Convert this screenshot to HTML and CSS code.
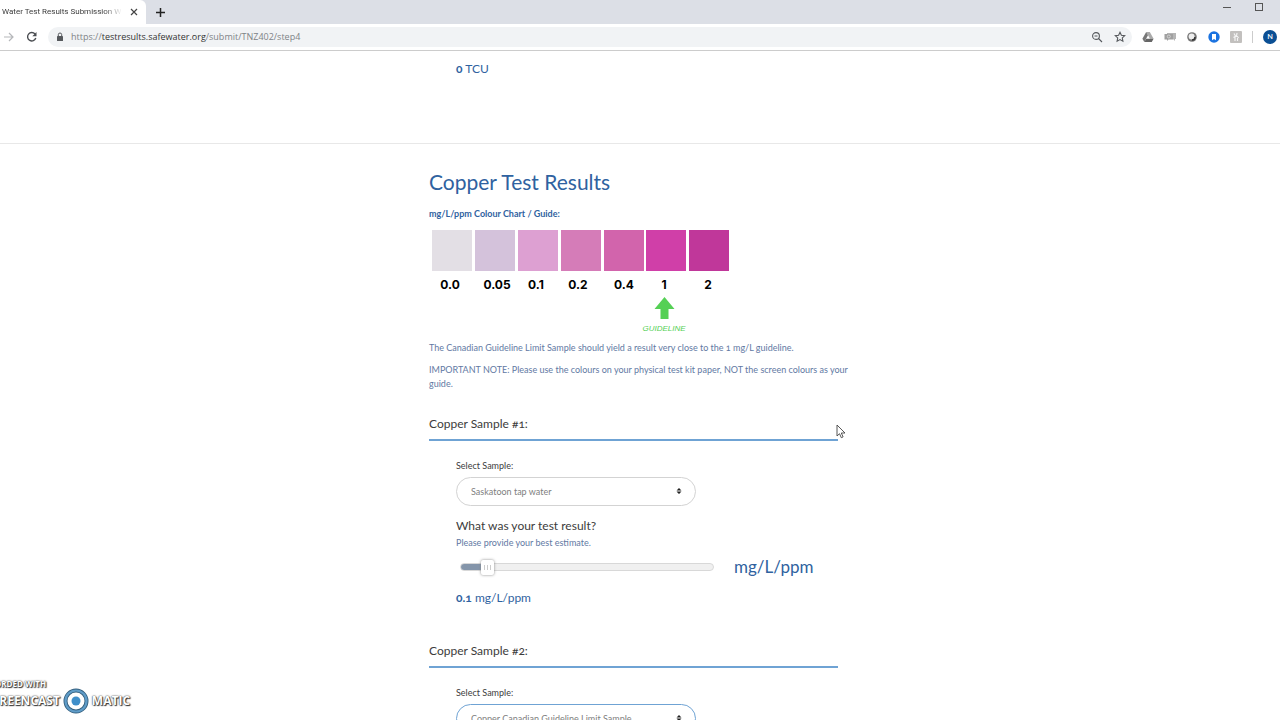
FILE: index.html
```html
<!DOCTYPE html>
<html lang="en">
  <head>
    <meta charset="utf-8" />
    <title>Water Test Results Submission</title>
    <link rel="stylesheet" href="styles.css">
  </head>
  <body>
    <div class="tab-strip">
      <div class="tab">
        <span class="tab-title">Water Test Results Submission W</span>
        <button class="tab-close" aria-label="Close tab">
          <svg width="8" height="8" viewBox="0 0 8 8"><path d="M1 1l6 6M7 1l-6 6" stroke="#444" stroke-width="1.2" /></svg>
        </button>
      </div>
      <button class="new-tab" aria-label="New tab">
        <svg width="9" height="9" viewBox="0 0 9 9"><path d="M4.5 0v9M0 4.500h9" stroke="#222" stroke-width="1.5" /></svg>
      </button>
      <div class="window-controls">
        <svg width="8" height="10" viewBox="0 0 8 10"><path d="M0 5.500h8" stroke="#555" /></svg>
        <svg width="8" height="10" viewBox="0 0 8 10"><rect x=".5" y="1.500" width="7" height="7" fill="none" stroke="#555" /></svg>
      </div>
    </div>

    <div class="toolbar">
      <svg class="forward" width="12" height="12" viewBox="0 0 12 12"><path d="M0 6h9M5 2l4 4-4 4" fill="none" stroke="#b5b7ba" stroke-width="1.2" /></svg>
      <svg width="12" height="12" viewBox="0 0 12 12"><path d="M9 3A4.200 4.200 0 1 0 9.800 7" fill="none" stroke="#4a4d51" stroke-width="1.400" /><path d="M10.500 1v4.200H6.300z" fill="#4a4d51" /></svg>
      <div class="omnibox">
        <svg width="8" height="10" viewBox="0 0 8 10"><rect x="1" y="4" width="6" height="5" rx=".6" fill="#55585c" /><path d="M2.300 4V2.700a1.700 1.700 0 0 1 3.400 0V4" fill="none" stroke="#55585c" /></svg>
        <span class="url">https://<b>testresults.safewater.org</b>/submit/TNZ402/step4</span>
        <div class="omnibox-icons">
          <svg width="12" height="12" viewBox="0 0 12 12"><circle cx="5" cy="5" r="3.400" fill="none" stroke="#55585c" stroke-width="1.100" /><path d="M7.500 7.500L11 11M3.500 5h3" stroke="#55585c" stroke-width="1.100" /></svg>
          <svg width="12" height="12" viewBox="0 0 12 12"><path d="M6 1.300l1.400 3 3.300.4-2.400 2.200.6 3.300L6 8.600l-2.900 1.600.6-3.300-2.400-2.200 3.300-.4z" fill="none" stroke="#55585c" stroke-width="1.100" /></svg>
        </div>
      </div>
      <div class="extensions">
        <svg width="12" height="12" viewBox="0 0 12 12"><path d="M4.200 1h3.600l3.800 6.700H8z" fill="#aaa" /><path d="M4.200 1L6 4.300 2.300 11 .4 7.700z" fill="#777" /><path d="M4.200 7.700h7.400L9.800 11H2.300z" fill="#666" /></svg>
        <svg width="12" height="12" viewBox="0 0 12 12"><path d="M3 2h9v6h-1v2L9 8H3z" fill="#b5b5b5" /><path d="M.5 3h8.500v5.500H4.500L3 10V8.500H.5z" fill="#a0a0a0" /><circle cx="4.800" cy="5.500" r="1.500" fill="none" stroke="#ddd" stroke-width=".8" /></svg>
        <svg width="12" height="12" viewBox="0 0 12 12"><circle cx="6" cy="6" r="4.800" fill="#777" /><circle cx="5.600" cy="5.400" r="3" fill="#eee" /><path d="M6 9a3 3 0 0 0 3-3" stroke="#333" stroke-width="1.500" fill="none" /></svg>
        <svg width="12" height="12" viewBox="0 0 12 12"><circle cx="6" cy="6" r="5.700" fill="#1b73e0" /><path d="M4 3h4v6.200L6 8 4 9.200z" fill="#fff" /></svg>
        <svg width="12" height="12" viewBox="0 0 12 12"><rect width="12" height="12" rx="1" fill="#c2c0be" /><path d="M4 2.500l1.500 2.500M7 2l-.5 3M3.500 6.500L5 5.500h2.500l1 1.500M5 6v4M7.500 7v3" stroke="#f4f4f4" stroke-width="1.200" fill="none" /></svg>
        <span class="divider"></span>
        <span class="avatar">N</span>
      </div>
    </div>

    <main class="page">
      <section class="band band-colour">
        <div class="column">
          <p class="reading indent"><b>0</b> TCU</p>
        </div>
      </section>

      <section class="band">
        <div class="column">
          <h1>Copper Test Results</h1>
          <h2>mg/L/ppm Colour Chart / Guide:</h2>
          <svg class="chart" width="306" height="108" viewBox="0 0 306 108" role="img" aria-label="Copper colour chart">
            <rect x="3" y="3" width="40" height="41" fill="#e3dfe5" />
            <rect x="46" y="3" width="40" height="41" fill="#d4c2db" />
            <rect x="89" y="3" width="40" height="41" fill="#dda0d2" />
            <rect x="132" y="3" width="40" height="41" fill="#d57cb8" />
            <rect x="175" y="3" width="40" height="41" fill="#d264ac" />
            <rect x="217" y="3" width="40" height="41" fill="#d03fa8" />
            <rect x="260" y="3" width="40" height="41" fill="#c0379a" />
            <g class="chart-value">
              <text x="21" y="62">0.0</text>
              <text x="68" y="62">0.05</text>
              <text x="107" y="62">0.1</text>
              <text x="149" y="62">0.2</text>
              <text x="195" y="62">0.4</text>
              <text x="235" y="62">1</text>
              <text x="279" y="62">2</text>
            </g>
            <path d="M235.500 70l10 12h-6v10h-8V82h-6z" fill="#55d055" />
            <text class="chart-guideline" x="235" y="104">GUIDELINE</text>
          </svg>
          <div class="notes">
            <p>The Canadian Guideline Limit Sample should yield a result very close to the 1 mg/L guideline.</p>
            <p>IMPORTANT NOTE: Please use the colours on your physical test kit paper, NOT the screen colours as your guide.</p>
          </div>

          <h3>Copper Sample #1:</h3>
          <div class="sample indent">
            <label class="select-label" for="sample1">Select Sample:</label>
            <div class="select-wrap">
              <select id="sample1"><option>Saskatoon tap water</option></select>
              <svg class="arrows" width="6" height="8" viewBox="0 0 6 8"><path d="M3 1l2.500 2.500H.5zM3 7L.5 4.500h5z" fill="#222" /></svg>
            </div>
            <label class="question" for="result1">What was your test result?</label>
            <p class="hint">Please provide your best estimate.</p>
            <div class="slider-row">
              <input class="slider" id="result1" type="range" min="0" max="1.2" step="0.1" value="0.1" />
              <span class="unit">mg/L/ppm</span>
            </div>
            <p class="reading"><b>0.1</b> mg/L/ppm</p>
          </div>

          <h3>Copper Sample #2:</h3>
          <div class="sample indent">
            <label class="select-label" for="sample2">Select Sample:</label>
            <div class="select-wrap">
              <select class="active" id="sample2"><option>Copper Canadian Guideline Limit Sample</option></select>
              <svg class="arrows" width="6" height="8" viewBox="0 0 6 8"><path d="M3 1l2.500 2.500H.5zM3 7L.5 4.500h5z" fill="#222" /></svg>
            </div>
          </div>
        </div>
      </section>
    </main>

    <svg class="cursor" width="10" height="15" viewBox="0 0 10 15"><path d="M1 1v11l2.500-2.300 1.800 4 1.800-.8-1.800-3.900H9z" fill="#fff" stroke="#444" stroke-width=".9" /></svg>

    <div class="watermark">
      <span class="watermark-top">RECORDED WITH</span>
      <div class="watermark-brand">
        <span>SCREENCAST</span>
        <svg width="26" height="26" viewBox="0 0 26 26"><circle cx="13" cy="13" r="10.500" fill="#fff" stroke="#35607f" stroke-width="4" /><circle cx="13" cy="13" r="10.500" fill="none" stroke="#5f9cc8" stroke-width="2.200" /><circle cx="13" cy="13" r="4.500" fill="#3f8fca" /></svg>
        <span>MATIC</span>
      </div>
    </div>
  </body>
</html>
```
FILE: styles.css
```css
:root {
  --blue: #2f62a0;
  --note: #6279a3;
  --line: #6fa3d4;
  --text: #3c3c3c;
}

* {
  box-sizing: border-box;
}

body {
  display: flex;
  flex-direction: column;
  height: 100vh;
  margin: 0;
  overflow: hidden;
  background: #fff;
  color: var(--text);
  font-family: Lato, "Liberation Sans", sans-serif;
  font-variant-numeric: oldstyle-nums;
}

h1, h2, h3, p {
  margin: 0;
  font-weight: normal;
}

button {
  display: flex;
  padding: 0;
  border: 0;
  background: none;
}

/* browser bar */
.tab-strip {
  display: flex;
  flex: none;
  align-items: center;
  height: 24px;
  background: #dcdfe6;
  font: 8px/24px Roboto, sans-serif;
}
.tab {
  display: flex;
  align-items: center;
  gap: 8px;
  width: 146px;
  height: 24px;
  padding-left: 2px;
  background: #fff;
  border-radius: 0 6px 0 0;
}
.tab-title {
  width: 120px;
  overflow: hidden;
  white-space: nowrap;
  -webkit-mask-image: linear-gradient(to right, #000 85%, transparent);
  mask-image: linear-gradient(to right, #000 85%, transparent);
}
.new-tab {
  margin-left: 10px;
}
.window-controls {
  display: flex;
  gap: 24px;
  height: 20px;
  margin-left: auto;
  padding-right: 17px;
}
.toolbar {
  display: flex;
  flex: none;
  align-items: center;
  gap: 10px;
  height: 27px;
  padding: 0 3px 0 4px;
  border-bottom: 1px solid #ccc;
  background: #fff;
}
.omnibox {
  display: flex;
  flex: 1;
  align-items: center;
  gap: 7px;
  height: 20px;
  padding: 0 6px 0 8px;
  border-radius: 10px;
  background: #f1f3f5;
}
.omnibox-icons {
  display: flex;
  gap: 11px;
}
.url {
  flex: 1;
  color: #808387;
  font: 9px/20px "Open Sans", sans-serif;
}
.url b {
  color: #333;
  font-weight: normal;
}
.extensions {
  display: flex;
  align-items: center;
  gap: 10px;
}
.divider {
  width: 1px;
  height: 12px;
  background: #ccc;
}
.avatar {
  width: 14px;
  border-radius: 50%;
  background: #0b4f94;
  color: #fff;
  font: 8px/14px Roboto, sans-serif;
  text-align: center;
}

/* form */
.page {
  flex: 1;
  overflow: hidden;
}
.band {
  padding: 22px 13px 0 0;
}
.band-colour {
  padding: 8px 13px 64px 0;
  border-bottom: 1px solid #e8e8e8;
}
.column {
  max-width: 409px;
  margin: 0 auto;
}
.indent {
  margin-left: 27px;
}
.reading {
  color: var(--blue);
  font-size: 12px;
  line-height: 20px;
}
h1 {
  color: var(--blue);
  font-size: 21px;
  line-height: 32px;
}
h2 {
  margin-top: 9px;
  color: var(--blue);
  font-size: 9px;
  font-weight: bold;
  line-height: 14px;
}
.chart {
  display: block;
  margin: 6px 0;
}
.chart-value {
  font: bold 12px Inter, sans-serif;
  font-variant-numeric: lining-nums;
  text-anchor: middle;
}
.chart-guideline {
  fill: #55d055;
  font: italic 8px "Liberation Sans", sans-serif;
  text-anchor: middle;
}
.notes {
  margin-right: -20px;
  color: var(--note);
  font-size: 9px;
  line-height: 14px;
}
.notes p {
  margin-bottom: 8px;
}
h3 {
  margin-top: 24px;
  padding-bottom: 6px;
  border-bottom: 2px solid var(--line);
  font-size: 12px;
  line-height: 18px;
}
.sample {
  display: flex;
  flex-direction: column;
  align-items: flex-start;
  padding: 18px 0 10px;
}
.select-label {
  font-size: 9px;
  line-height: 14px;
}
.select-wrap {
  display: flex;
  position: relative;
  width: 240px;
  margin: 4px 0 11px;
}
select {
  width: 100%;
  height: 29px;
  padding: 0 14px;
  border: 1px solid #d3d3d3;
  border-radius: 15px;
  appearance: none;
  background: #fff;
  color: #808080;
  font: 9px Lato, sans-serif;
}
select.active {
  border-color: var(--line);
}
.arrows {
  position: absolute;
  top: 10px;
  right: 14px;
  pointer-events: none;
}
.question {
  font-size: 12px;
  line-height: 18px;
}
.hint {
  color: var(--note);
  font-size: 9px;
  line-height: 16px;
}
.slider-row {
  display: flex;
  align-items: center;
  gap: 20px;
  padding-left: 4px;
}
.slider {
  width: 254px;
  height: 16px;
  margin: 0;
  appearance: none;
  background: none;
}
.slider::-webkit-slider-runnable-track {
  height: 8px;
  border: 1px solid #d8d8d8;
  border-radius: 4px;
  background: linear-gradient(to right, #8495aa 10%, #f0f0f0 10%);
}
.slider::-webkit-slider-thumb {
  width: 13px;
  height: 15px;
  margin-top: -4px;
  border-radius: 2px;
  appearance: none;
  background: repeating-linear-gradient(to right, #ccc 0 1px, #fff 1px 3px) center / 7px 5px no-repeat #fff;
  box-shadow: 0 0 3px #888;
}
.unit {
  color: var(--blue);
  font-size: 17px;
  line-height: 32px;
}
.slider-row + .reading {
  margin-top: 5px;
}

.cursor {
  position: absolute;
  top: 424px;
  left: 836px;
}

/* recorder badge */
.watermark {
  position: absolute;
  bottom: 6px;
  left: -20px;
  color: #fff;
  font: bold 12px/26px "Open Sans", sans-serif;
  text-shadow: 1px 1px 1px #333, 0 0 1px #333, 0 0 2px #666;
}
.watermark-top {
  display: block;
  font-size: 8px;
  line-height: 8px;
}
.watermark-brand {
  display: flex;
  gap: 3px;
  padding-left: 5px;
}
```
